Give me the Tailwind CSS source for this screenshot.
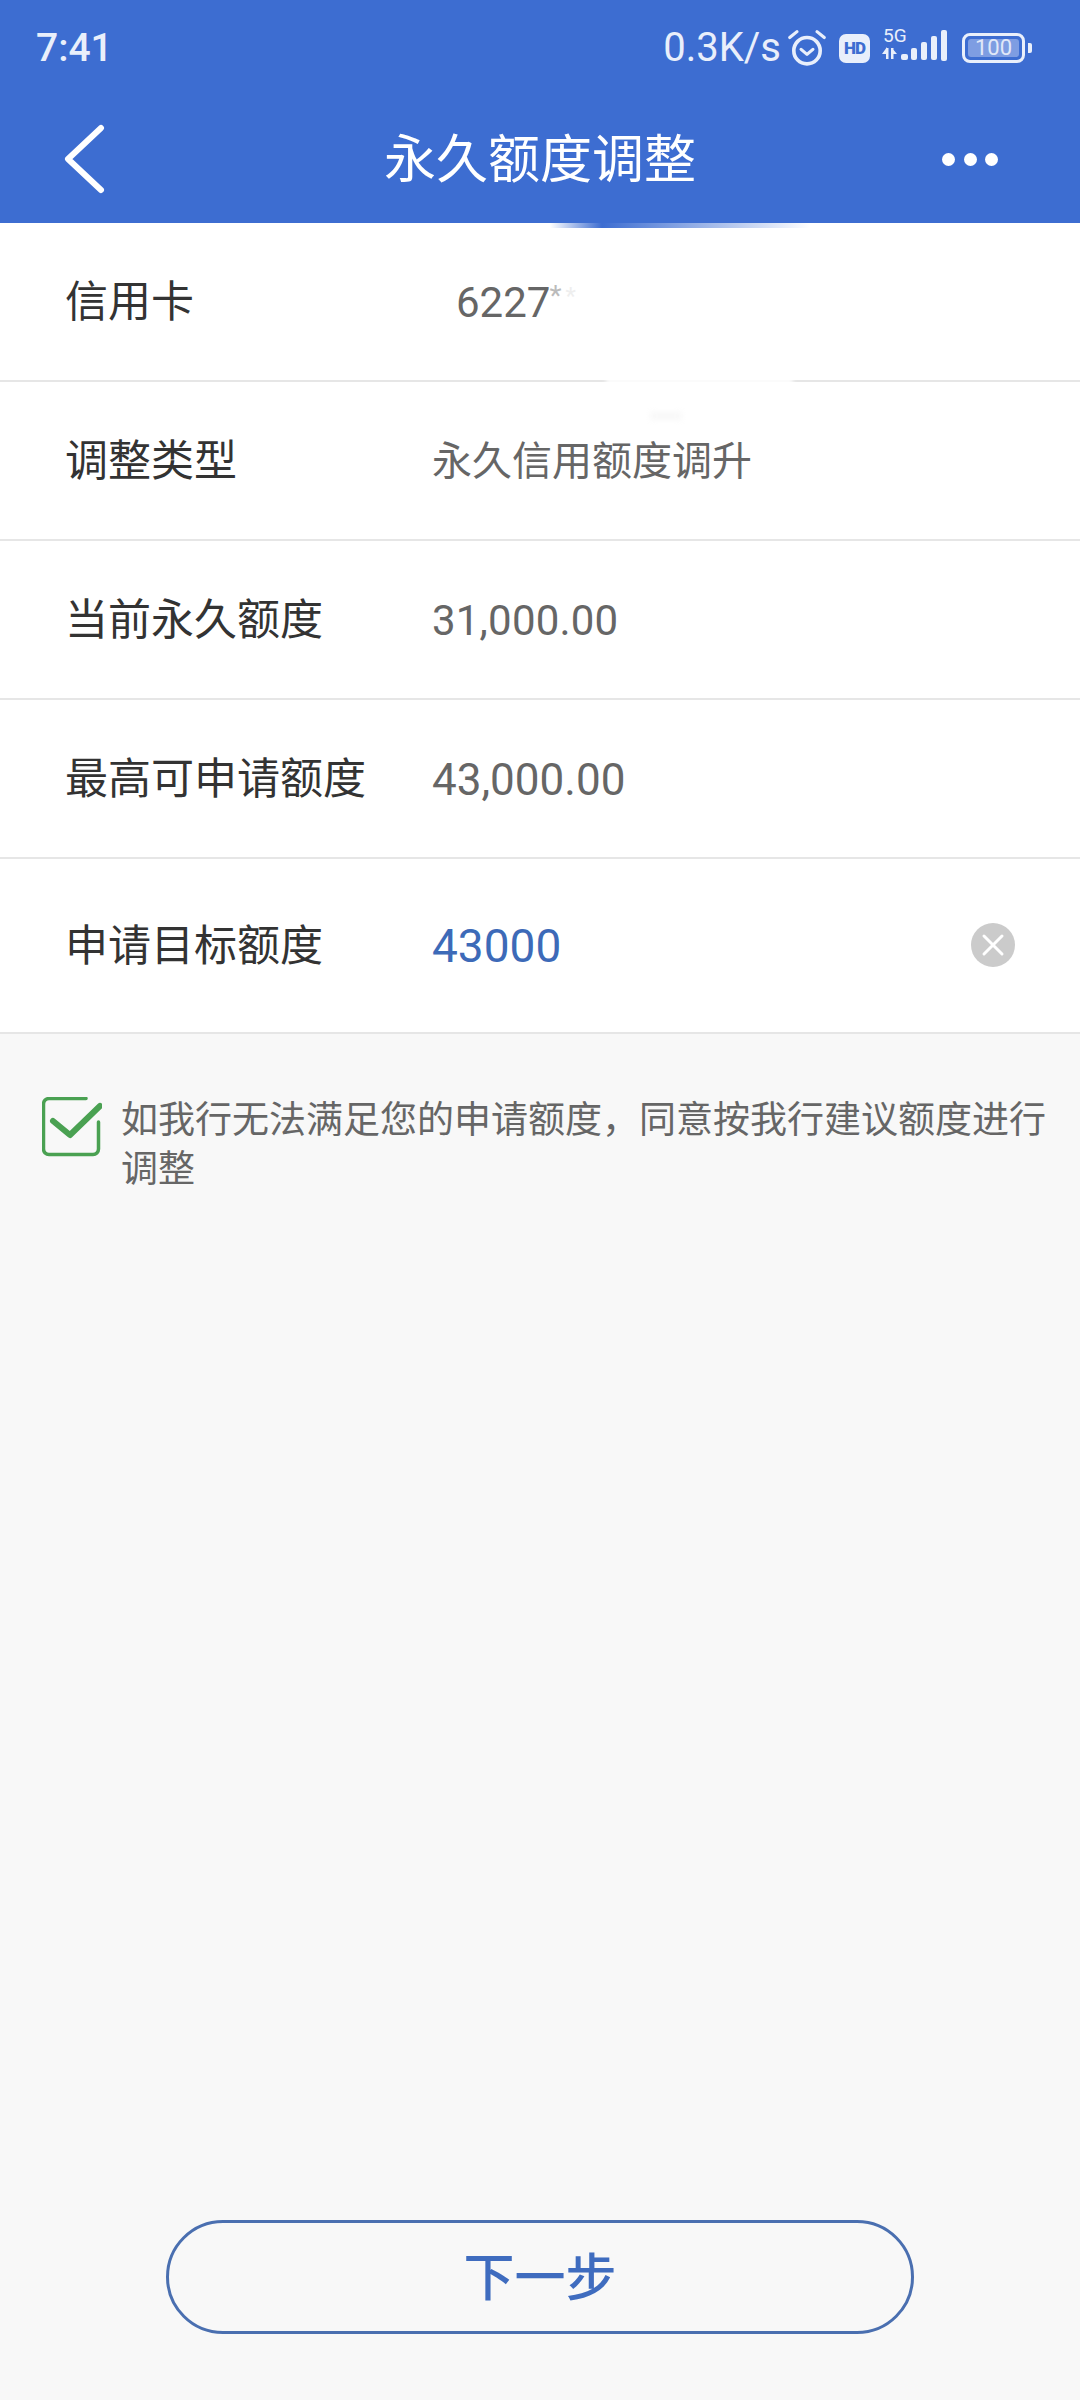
<!DOCTYPE html>
<html lang="zh-CN">
<head>
    <meta charset="UTF-8">
    <meta name="viewport" content="width=device-width, initial-scale=1.0">
    <title>永久额度调整</title>
    <script src="https://cdn.jsdelivr.net/npm/@tailwindcss/browser@4"></script>
</head>
<body class="font-['Roboto','Noto_Sans_CJK_SC',sans-serif] bg-[#f8f8f8]">
<div class="relative w-[1080px] h-[2400px] flex flex-col bg-[#f8f8f8] overflow-hidden">

    <!-- Header -->
    <header class="h-[223px] bg-[#3d6dd1] text-[#fff] flex flex-col shrink-0">
        <div class="h-[96px] pl-[36px] pr-[48px] flex items-center justify-between text-[#e9effb]">
            <span class="text-[39px] font-medium leading-none">7:41</span>
            <div class="flex items-center">
                <span class="text-[40px] leading-none">0.3K/s</span>
                <svg class="ml-[6px]" width="40" height="42" viewBox="0 0 44 44" fill="none" stroke="#e9effb" stroke-linecap="round" stroke-linejoin="round">
                    <circle cx="22" cy="25" r="14.5" stroke-width="4"/>
                    <path d="M15.5 23.5 22 29l6.500-5.500" stroke-width="3.500"/>
                    <path d="M3 10.500 11 4M41 10.500 33 4" stroke-width="3.500"/>
                </svg>
                <span class="ml-[12px] w-[31px] h-[29px] rounded-[7px] bg-[#e9effb] text-[#3d6dd1] text-[17px] font-black leading-[29px] text-center tracking-[-1px]">HD</span>
                <div class="relative ml-[11px] w-[68px] h-[40px]">
                    <span class="absolute left-[2px] -top-[3px] text-[19px] leading-[22px]">5G</span>
                    <svg width="68" height="40" viewBox="0 0 68 40" fill="#e9effb">
                        <path d="M5 20h2.500v11H5zM1 26l5-7 0 7zM10 20h2.500v11H10zM11 20l5 6h-5z"/>
                        <rect x="20" y="26" width="7" height="6" rx="2"/>
                        <rect x="30" y="20" width="6" height="12" rx="2"/>
                        <rect x="40" y="14" width="6" height="18" rx="2"/>
                        <rect x="50" y="8" width="6" height="24" rx="2"/>
                        <rect x="60" y="2" width="6" height="31" rx="2"/>
                    </svg>
                </div>
                <div class="ml-[13px] w-[63px] h-[30px] rounded-[8px] border-[3px] border-[#e9effb] p-[3px] flex">
                    <span class="w-full h-full rounded-[3px] bg-[#7e9de2] text-[#e1e8f8] text-[22px] leading-[18px] text-center">100</span>
                </div>
                <span class="ml-[3px] w-[4px] h-[10px] rounded-r-[2px] bg-[#e9effb]"></span>
            </div>
        </div>
        <div class="relative flex-1 flex items-center justify-center pt-[3px]">
            <svg class="absolute left-[62px] top-[28px]" width="44" height="70" viewBox="0 0 44 70" fill="none" stroke="#fff" stroke-width="6" stroke-linecap="round" stroke-linejoin="round">
                <path d="M39 4 6 35l33 31"/>
            </svg>
            <h1 class="text-[52px] leading-none font-normal">永久额度调整</h1>
            <div class="absolute left-[942px] top-[57px] flex gap-[8.500px]">
                <span class="size-[13px] rounded-full bg-[#fff]"></span>
                <span class="size-[13px] rounded-full bg-[#fff]"></span>
                <span class="size-[13px] rounded-full bg-[#fff]"></span>
            </div>
        </div>
    </header>

    <!-- Form rows -->
    <section class="bg-[#fff] shrink-0">
        <div class="h-[159px] pt-[2px] flex items-center border-b-2 border-[#e6e6e6]">
            <span class="w-[456px] pl-[65px] text-[43px] text-[#333]">信用卡</span>
            <span class="text-[42px] text-[#666]">6227</span>
            <span class="-ml-[1px] -mt-[14px] text-[28px] text-[#bbb]">*</span>
            <span class="ml-[4px] -mt-[14px] text-[24px] text-[#eee]">*</span>
        </div>
        <div class="h-[159px] pt-[2px] flex items-center border-b-2 border-[#e6e6e6]">
            <span class="w-[432px] pl-[65px] text-[43px] text-[#333]">调整类型</span>
            <span class="text-[40px] text-[#666]">永久信用额度调升</span>
        </div>
        <div class="h-[159px] pt-[2px] flex items-center border-b-2 border-[#e6e6e6]">
            <span class="w-[432px] pl-[65px] text-[43px] text-[#333]">当前永久额度</span>
            <span class="text-[42px] tracking-[0.2px] text-[#666]">31,000.00</span>
        </div>
        <div class="h-[159px] pt-[2px] flex items-center border-b-2 border-[#e6e6e6]">
            <span class="w-[432px] pl-[65px] text-[43px] text-[#333]">最高可申请额度</span>
            <span class="text-[44px] text-[#666]">43,000.00</span>
        </div>
        <div class="relative h-[175px] pt-[2px] flex items-center border-b-2 border-[#e6e6e6]">
            <span class="w-[432px] pl-[65px] text-[43px] text-[#333]">申请目标额度</span>
            <span class="text-[46px] text-[#3d6ab8]">43000</span>
            <svg class="absolute left-[971px] top-[64px]" width="44" height="44" viewBox="0 0 44 44">
                <circle cx="22" cy="22" r="22" fill="#cbcbcb"/>
                <path d="M13 13l18 18M31 13 13 31" stroke="#fff" stroke-width="3" stroke-linecap="round"/>
            </svg>
        </div>
    </section>

    <!-- Agreement -->
    <div class="flex mt-[63px] pl-[42px] pr-[30px]">
        <svg class="shrink-0" width="60" height="60" viewBox="0 0 60 60" fill="none" stroke="#4aa152" stroke-linecap="round" stroke-linejoin="round">
            <path d="M44 1.500H7a5.500 5.500 0 0 0-5.500 5.500v45a5.500 5.500 0 0 0 5.500 5.500h44a5.500 5.500 0 0 0 5.500-5.500V25" stroke-width="3.500"/>
            <path d="M11 24 28 38 58 9" stroke-width="6"/>
        </svg>
        <p class="ml-[19px] -mt-[1px] text-[37px] leading-[49px] text-[#666]">如我行无法满足您的申请额度，同意按我行建议额度进行调整</p>
    </div>

    <!-- Next step -->
    <button class="mt-auto mb-[66px] mx-auto w-[748px] h-[114px] rounded-full border-[3px] border-[#4a6fb0] pt-[3px] text-[51px] font-medium leading-none text-[#3f6cbf]">下一步</button>

    <!-- Blur smudges left on the screenshot -->
    <div class="absolute left-[550px] top-[223px] w-[260px] h-[5px] bg-linear-to-r from-[#3d6dd1]/0 via-[#3d6dd1] via-20% to-[#3d6dd1]/0"></div>
    <div class="absolute left-[606px] top-[378px] w-[187px] h-[6px] bg-[#fff] blur-[2px]"></div>
    <div class="absolute left-[650px] top-[413px] w-[32px] h-[6px] bg-[#f6f6f6] blur-[3px]"></div>
</div>
</body>
</html>
